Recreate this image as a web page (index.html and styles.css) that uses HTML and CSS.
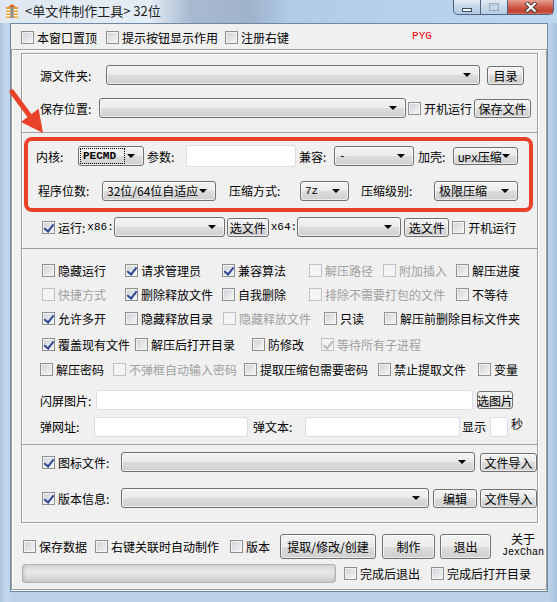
FILE: index.html
```html
<!DOCTYPE html>
<html>
<head>
    <meta charset="utf-8">
    <title>单文件制作工具</title>
    <link rel="stylesheet" href="styles.css">
</head>
<body>
    <div class="titlebar">
        <svg class="app-icon" width="16" height="16" viewBox="0 0 16 16">
            <path d="M4 4 L8 1 L12 4 Z" fill="#d8692b"/>
            <rect x="2" y="4" width="12" height="11" fill="#eaa43c"/>
            <rect x="2" y="6" width="12" height="1.5" fill="#f8f2e2"/>
            <rect x="2" y="9" width="12" height="1.5" fill="#f8f2e2"/>
            <rect x="2" y="12" width="12" height="1.5" fill="#f8f2e2"/>
            <rect x="6.5" y="4" width="3" height="11" fill="#8d8d8d"/>
        </svg>
        <span class="title">&lt;单文件制作工具&gt; 32位</span>
        <div class="caption">
            <span class="cap cap-min"><i></i></span>
            <span class="cap cap-max"><i></i></span>
            <span class="cap cap-close">
                <svg width="14" height="11" viewBox="0 0 14 11">
                    <path d="M2 0.5 L12 10 M12 0.5 L2 10" stroke="#3a2a2a" stroke-width="4"/>
                    <path d="M2.5 1 L11.5 9.5 M11.5 1 L2.5 9.5" stroke="#fff" stroke-width="2.4"/>
                </svg>
            </span>
        </div>
    </div>

    <div class="client">
        <div class="toprow">
            <label class="cb"><i></i>本窗口置顶</label>
            <label class="cb ml9"><i></i>提示按钮显示作用</label>
            <label class="cb ml7"><i></i>注册右键</label>
            <span class="pyg">PYG</span>
        </div>

        <div class="panel">
            <div class="group">
                <div class="sec sec-a">
                    <div class="row row-src">
                        <span class="lbl w66">源文件夹:</span>
                        <div class="combo w374"></div>
                        <div class="btn btn-dir">目录</div>
                    </div>
                    <div class="row row-save">
                        <span class="lbl w59">保存位置:</span>
                        <div class="combo w307"></div>
                        <label class="cb ml2"><i></i>开机运行</label>
                        <div class="btn btn-save">保存文件</div>
                    </div>
                </div>

                <div class="sec sec-b">
                    <div class="row row-kern">
                        <span class="lbl w42">内核:</span>
                        <div class="combo w66 focus"><span class="mono bold">PECMD</span></div>
                        <span class="lbl w39 ml3">参数:</span>
                        <div class="input w110 h22"></div>
                        <span class="lbl w35 ml3">兼容:</span>
                        <div class="combo w80"><span class="mono">-</span></div>
                        <span class="lbl w35 ml4">加壳:</span>
                        <div class="combo w65 h18"><span><span class="mono">UPX</span>压缩</span></div>
                    </div>
                    <div class="row row-bits">
                        <span class="lbl w64">程序位数:</span>
                        <div class="combo w114">32位/64位自适应</div>
                        <span class="lbl w71 ml13">压缩方式:</span>
                        <div class="combo w49"><span class="mono">7z</span></div>
                        <span class="lbl w73 ml12">压缩级别:</span>
                        <div class="combo w84">极限压缩</div>
                    </div>
                    <div class="row row-run">
                        <label class="cb"><i class="on"></i>运行:</label>
                        <span class="mono ml2">x86:</span>
                        <div class="combo w111"></div>
                        <div class="btn w42 ml2">选文件</div>
                        <span class="mono ml2">x64:</span>
                        <div class="combo w104"></div>
                        <div class="btn w45 ml3">选文件</div>
                        <label class="cb ml3"><i></i>开机运行</label>
                    </div>
                </div>

                <div class="sec sec-c">
                    <div class="opts r1">
                        <label class="cb"><i></i>隐藏运行</label>
                        <label class="cb"><i class="on"></i>请求管理员</label>
                        <label class="cb"><i class="on"></i>兼容算法</label>
                        <label class="cb off"><i></i>解压路径</label>
                        <label class="cb off"><i></i>附加插入</label>
                        <label class="cb"><i></i>解压进度</label>
                    </div>
                    <div class="opts r2">
                        <label class="cb off"><i></i>快捷方式</label>
                        <label class="cb"><i class="on"></i>删除释放文件</label>
                        <label class="cb"><i></i>自我删除</label>
                        <label class="cb off"><i></i>排除不需要打包的文件</label>
                        <label class="cb"><i></i>不等待</label>
                    </div>
                    <div class="opts r3">
                        <label class="cb"><i class="on"></i>允许多开</label>
                        <label class="cb"><i></i>隐藏释放目录</label>
                        <label class="cb off"><i></i>隐藏释放文件</label>
                        <label class="cb"><i></i>只读</label>
                        <label class="cb"><i></i>解压前删除目标文件夹</label>
                    </div>
                    <div class="opts r4">
                        <label class="cb"><i class="on"></i>覆盖现有文件</label>
                        <label class="cb"><i></i>解压后打开目录</label>
                        <label class="cb"><i></i>防修改</label>
                        <label class="cb off"><i class="on"></i>等待所有子进程</label>
                    </div>
                    <div class="opts r5">
                        <label class="cb"><i></i>解压密码</label>
                        <label class="cb off"><i></i>不弹框自动输入密码</label>
                        <label class="cb"><i></i>提取压缩包需要密码</label>
                        <label class="cb"><i></i>禁止提取文件</label>
                        <label class="cb"><i></i>变量</label>
                    </div>
                    <div class="row row-flash">
                        <span class="lbl w56">闪屏图片:</span>
                        <div class="input w377"></div>
                        <div class="btn btn-pic">选图片</div>
                    </div>
                    <div class="row row-web">
                        <span class="lbl w54">弹网址:</span>
                        <div class="input w154"></div>
                        <span class="lbl w52 ml5">弹文本:</span>
                        <div class="input w155"></div>
                        <span class="lbl w28 ml2">显示</span>
                        <div class="input w18"></div>
                        <span class="sec-unit">秒</span>
                    </div>
                </div>

                <div class="sec sec-d">
                    <div class="row row-icon">
                        <label class="cb w95"><i class="on"></i>图标文件:</label>
                        <div class="combo w354"></div>
                        <div class="btn btn-imp ml5">文件导入</div>
                    </div>
                    <div class="row row-ver">
                        <label class="cb w95"><i class="on"></i>版本信息:</label>
                        <div class="combo w308"></div>
                        <div class="btn w44 ml4">编辑</div>
                        <div class="btn btn-imp ml3">文件导入</div>
                    </div>
                </div>
            </div>

            <div class="row row-make">
                <label class="cb"><i></i>保存数据</label>
                <label class="cb ml8"><i></i>右键关联时自动制作</label>
                <label class="cb ml11"><i></i>版本</label>
                <div class="btn big w96 ml10">提取/修改/创建</div>
                <div class="btn big w53 ml6">制作</div>
                <div class="btn big w51 ml5">退出</div>
                <div class="about">
                    <span class="about-cn">关于</span>
                    <span class="mono about-en">JexChan</span>
                </div>
            </div>
            <div class="row row-prog">
                <div class="progress"></div>
                <label class="cb ml8"><i></i>完成后退出</label>
                <label class="cb ml11"><i></i>完成后打开目录</label>
            </div>
        </div>
    </div>

    <div class="mark-box"></div>
    <svg class="mark-arrow" width="60" height="60" viewBox="0 80 60 60">
        <path d="M12 92 L32 119" stroke="#ea4228" stroke-width="5" stroke-linecap="round"/>
        <polygon points="43,133 21,122 38.6,108.8" fill="#ea4228"/>
    </svg>
</body>
</html>
```

FILE: styles.css
```css
* {
    box-sizing: border-box;
}

body {
    margin: 0;
    width: 557px;
    height: 602px;
    overflow: hidden;
    position: relative;
    background: linear-gradient(90deg, #a9c3de 0, #c6daef 6px, #bcd3ea 10px, #bcd3ea 548px, #a8c2dd 100%);
    font-family: "Noto Sans CJK SC", "Liberation Sans", sans-serif;
    font-size: 12px;
    color: #000;
}

/* title bar */

.titlebar {
    height: 23px;
    display: flex;
    align-items: flex-start;
    background: linear-gradient(90deg, #dfe8f1 0, #e4ecf4 150px, #a8bad0 190px, #9fb3cb 250px, #b1cbe6 290px, #bed7ef 100%);
}

.app-icon {
    margin: 3px 0 0 4px;
}

.title {
    margin: 1px 0 0 5px;
    font-size: 13px;
    line-height: 20px;
    color: #1e1e1e;
}

.caption {
    display: flex;
    margin-left: auto;
    margin-right: 3px;
    height: 15px;
}

.cap {
    border: 1px solid #4c6382;
    border-top: none;
    display: flex;
    align-items: center;
    justify-content: center;
}

.cap-min {
    width: 28px;
    border-radius: 0 0 0 5px;
    background: linear-gradient(#e4edf7, #c4d6ea 50%, #b3c9e3);
}

.cap-min i {
    width: 10px;
    height: 4px;
    margin-top: 5px;
    background: #fff;
    border: 1px solid #3c4c64;
}

.cap-max {
    width: 27px;
    border-left: none;
    background: linear-gradient(#e1eaf4, #c8d8ea 50%, #b9cde3);
}

.cap-max i {
    width: 10px;
    height: 8px;
    border: 1px solid #8d9fb8;
    box-shadow: inset 0 2px 0 #b9c8da;
    opacity: .8;
}

.cap-close {
    width: 46px;
    border-left: none;
    border-radius: 0 0 5px 0;
    background: linear-gradient(#e7a094, #cf5a48 50%, #c2402f 80%, #d6705d);
}

/* client area */

.client {
    margin-left: 10px;
    width: 538px;
    height: 569px;
    border: 1px solid #6f88a6;
    background: #f0f0f0;
}

.toprow {
    height: 25px;
    display: flex;
    align-items: center;
    padding: 2px 0 0 10px;
}

.pyg {
    margin: -3px 0 0 123px;
    font-family: "Liberation Mono", monospace;
    font-size: 11px;
    color: #ff0000;
}

.panel {
    height: 541px;
    border: 1px solid #a0a0a0;
    box-shadow: inset 1px 1px 0 #fff;
}

.group {
    margin: 3px 8px 0 9px;
    height: 470px;
    border: 1px solid #a0a0a0;
    box-shadow: inset 1px 1px 0 #fff, 1px 1px 0 #fff;
}

.sec {
    border-bottom: 1px solid #a0a0a0;
}

.sec-a {
    height: 79px;
    padding-top: 11px;
}

.sec-b {
    height: 116px;
    padding-top: 13px;
}

.sec-c {
    height: 196px;
    padding-top: 9px;
}

.sec-d {
    border-bottom: none;
    padding-top: 7px;
}

.row {
    display: flex;
    align-items: center;
    height: 20px;
    white-space: nowrap;
}

.row-src,
.row-save {
    padding-left: 18px;
}

.row-save {
    margin-top: 13px;
}

.row-kern {
    padding-left: 14px;
}

.row-bits {
    padding-left: 16px;
    margin-top: 15px;
    height: 19px;
}

.row-run {
    padding-left: 20px;
    margin-top: 18px;
    height: 18px;
}

.row-flash {
    padding-left: 18px;
    margin-top: 9px;
}

.row-web {
    padding-left: 18px;
    margin-top: 6px;
    height: 21px;
}

.row-icon,
.row-ver {
    padding-left: 20px;
}

.row-ver {
    margin-top: 16px;
}

.row-make {
    margin-top: 11px;
    height: 25px;
    padding-left: 11px;
}

.row-prog {
    margin-top: 5px;
    height: 19px;
    padding-left: 10px;
}

/* checkbox option grid */

.opts {
    display: grid;
    align-items: center;
    height: 24px;
    padding-left: 20px;
    white-space: nowrap;
}

.r1 {
    grid-template-columns: 83px 97px 87px 74px 73px auto;
}

.r2 {
    grid-template-columns: 83px 97px 87px 147px auto;
}

.r3 {
    grid-template-columns: 83px 98px 101px 60px auto;
}

.r4 {
    margin-top: 2px;
    grid-template-columns: 93px 117px 69px auto;
}

.r5 {
    margin-top: 1px;
    padding-left: 18px;
    grid-template-columns: 73px 131px 134px 100px auto;
}

/* controls */

.cb {
    display: flex;
    align-items: center;
    white-space: nowrap;
}

.cb i {
    flex: none;
    position: relative;
    width: 13px;
    height: 13px;
    margin-right: 3px;
    border: 1px solid #8e8f8f;
    background: linear-gradient(135deg, #cdd1d6, #f6f6f6);
    box-shadow: inset 0 0 0 1px #f3f3f3;
}

.cb i.on::after {
    content: "";
    position: absolute;
    left: 3px;
    top: 0;
    width: 4px;
    height: 8px;
    border: solid #2f4596;
    border-width: 0 2px 2px 0;
    transform: rotate(38deg);
}

.cb.off {
    color: #a0a0a0;
}

.cb.off i {
    border-color: #c2c2c2;
    background: #f4f4f4;
    box-shadow: none;
}

.cb.off i.on::after {
    border-color: #b8b8b8;
}

.lbl {
    flex: none;
}

.combo,
.btn {
    flex: none;
    height: 20px;
    border: 1px solid #707070;
    border-radius: 3px;
    background: linear-gradient(#f3f3f3 0, #ebebeb 50%, #dddddd 50%, #cfcfcf 100%);
    box-shadow: inset 0 0 0 1px rgba(255, 255, 255, .6);
}

.combo {
    display: flex;
    align-items: center;
    justify-content: space-between;
    padding: 0 8px 0 4px;
}

.combo::after {
    content: "";
    margin-left: auto;
    border-left: 4px solid transparent;
    border-right: 4px solid transparent;
    border-top: 4px solid #000;
}

.combo.focus span {
    outline: 1px dotted #000;
    padding: 1px 8px 1px 2px;
    margin-left: -2px;
}

.btn {
    display: flex;
    align-items: center;
    justify-content: center;
    height: 19px;
}

.btn.big {
    height: 25px;
}

.btn-dir {
    width: 37px;
    margin-left: 7px;
}

.btn-save {
    width: 57px;
    margin-left: 2px;
}

.btn-pic {
    width: 36px;
    height: 18px;
    margin-left: 4px;
}

.btn-imp {
    width: 57px;
}

.input {
    flex: none;
    height: 20px;
    background: #fff;
    border: 1px solid #d9dee5;
    border-radius: 2px;
}

.mono {
    font-family: "Liberation Mono", "DejaVu Sans Mono", monospace;
    font-size: 11px;
}

.bold {
    font-weight: bold;
}

.sec-unit {
    margin: -6px 0 0 3px;
}

.progress {
    width: 314px;
    height: 19px;
    border: 1px solid #b2b2b2;
    border-radius: 3px;
    background: linear-gradient(90deg, rgba(0, 0, 0, .08), transparent 4px, transparent 310px, rgba(0, 0, 0, .08)),
        linear-gradient(#d3d3d3, #e8e8e8 40%, #dcdcdc 70%, #c8c8c8);
}

.about {
    display: flex;
    flex-direction: column;
    align-items: center;
    gap: 2px;
    margin: -2px 0 0 11px;
}

.about-cn {
    line-height: 12px;
}

.about-en {
    font-size: 10px;
    line-height: 11px;
}

/* widths and gaps */

.w18 { width: 18px; }
.w28 { width: 28px; }
.w35 { width: 35px; }
.w39 { width: 39px; }
.w42 { width: 42px; }
.w44 { width: 44px; }
.w45 { width: 45px; }
.w49 { width: 49px; }
.w51 { width: 51px; }
.w52 { width: 52px; }
.w53 { width: 53px; }
.w54 { width: 54px; }
.w56 { width: 56px; }
.w59 { width: 59px; }
.w64 { width: 64px; }
.w65 { width: 65px; }
.w66 { width: 66px; }
.w71 { width: 71px; }
.w73 { width: 73px; }
.w80 { width: 80px; }
.w84 { width: 84px; }
.w95 { width: 95px; }
.w96 { width: 96px; }
.w104 { width: 104px; }
.w110 { width: 110px; }
.w111 { width: 111px; }
.w114 { width: 114px; }
.w154 { width: 154px; }
.w155 { width: 155px; }
.w307 { width: 307px; }
.w308 { width: 308px; }
.w354 { width: 354px; }
.w374 { width: 374px; }
.w377 { width: 377px; }
.h18 { height: 18px; }
.h22 { height: 22px; }

.ml2 { margin-left: 2px; }
.ml3 { margin-left: 3px; }
.ml4 { margin-left: 4px; }
.ml5 { margin-left: 5px; }
.ml6 { margin-left: 6px; }
.ml7 { margin-left: 7px; }
.ml8 { margin-left: 8px; }
.ml9 { margin-left: 9px; }
.ml10 { margin-left: 10px; }
.ml11 { margin-left: 11px; }
.ml12 { margin-left: 12px; }
.ml13 { margin-left: 13px; }

/* red annotation drawn over the window */

.mark-box {
    position: absolute;
    left: 24px;
    top: 137px;
    width: 509px;
    height: 75px;
    border: 4px solid #ea4228;
    border-radius: 8px;
}

.mark-arrow {
    position: absolute;
    left: 0;
    top: 80px;
}
```
